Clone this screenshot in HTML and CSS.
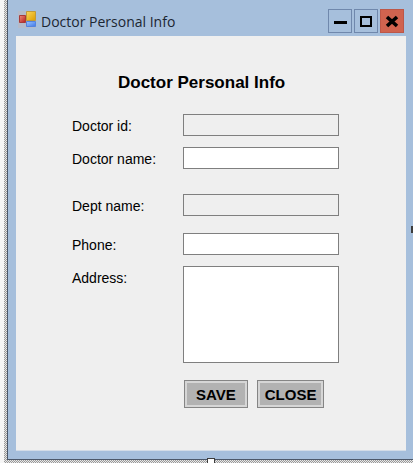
FILE: index.html
```html
<!DOCTYPE html>
<html lang="en">
<head>
<meta charset="utf-8">
<title>Doctor Personal Info</title>
<link rel="stylesheet" href="styles.css">
</head>
<body>
<div class="designer">
  <main class="window">
    <header class="titlebar">
      <svg class="app-icon" width="18" height="18" viewBox="0 0 18 18" aria-hidden="true">
        <defs>
          <linearGradient id="red" x2="1" y2="1"><stop stop-color="#ef8b7c"/><stop offset="1" stop-color="#b51f1c"/></linearGradient>
          <linearGradient id="gold" x2="1" y2="1"><stop stop-color="#fbd75a"/><stop offset="1" stop-color="#dc9d00"/></linearGradient>
          <linearGradient id="blue" x2="1" y2="1"><stop stop-color="#9cc4ff"/><stop offset="1" stop-color="#3f78e8"/></linearGradient>
        </defs>
        <path d="M0 0h18v17H0z" fill="#b4bbca"/>
        <path d="M1.500 4.500h6v7h-6z" fill="url(#red)" stroke="#a83a38"/>
        <path d="M8.500 .5h9v9h-9z" fill="url(#gold)" stroke="#c09a38"/>
        <path d="M8.500 10.500h9v5h-9z" fill="url(#blue)" stroke="#5584dc"/>
      </svg>
      <span class="caption">Doctor Personal Info</span>
      <button class="control" type="button" aria-label="Minimize">
        <svg width="22" height="22" viewBox="0 0 22 22"><path d="M5 11h13v3H5z"/></svg>
      </button>
      <button class="control" type="button" aria-label="Maximize">
        <svg width="22" height="22" viewBox="0 0 22 22"><path d="M5 6h12v11H5zM7 8v7h8V8z" fill-rule="evenodd"/></svg>
      </button>
      <button class="control control-close" type="button" aria-label="Close window">
        <svg width="22" height="22" viewBox="0 0 22 22"><path d="M6 7l10 9M16 7l-10 9" stroke="#000" stroke-width="3.600"/></svg>
      </button>
    </header>
    <form class="form">
      <h1 class="heading">Doctor Personal Info</h1>
      <div class="row">
        <label for="doctor-id">Doctor id:</label>
        <input class="field" id="doctor-id" type="text" disabled>
      </div>
      <div class="row row-last">
        <label for="doctor-name">Doctor name:</label>
        <input class="field" id="doctor-name" type="text">
      </div>
      <div class="row row-wide">
        <label for="dept-name">Dept name:</label>
        <input class="field" id="dept-name" type="text" disabled>
      </div>
      <div class="row">
        <label for="phone">Phone:</label>
        <input class="field" id="phone" type="text">
      </div>
      <div class="row">
        <label for="address">Address:</label>
        <textarea class="field field-tall" id="address"></textarea>
      </div>
      <div class="actions">
        <button class="action action-save" type="button">SAVE</button>
        <button class="action" type="button">CLOSE</button>
      </div>
    </form>
  </main>
  <span class="handle handle-bottom"></span>
  <span class="handle handle-right"></span>
</div>
</body>
</html>
```
FILE: styles.css
```css
* {
  box-sizing: border-box;
}

body {
  margin: 0;
  background: #f6f6f6;
  font-family: "Liberation Sans", Arial, sans-serif;
  color: #000;
  overflow: hidden;
}

.designer {
  position: relative;
  display: flex;
  flex-direction: column;
  min-height: 100vh;
  margin-left: 4px;
  padding: 0 0 3px 3px;
  background: repeating-conic-gradient(#999 0 25%, #e8e8e8 0 50%) 0 0 / 2px 2px;
}

.window {
  flex: 1;
  display: flex;
  flex-direction: column;
  padding: 0 7px 8px 8px;
  border: solid #4c586a;
  border-width: 0 0 1px 1px;
  background: #a6bfdc;
}

.titlebar {
  display: flex;
  align-items: center;
  gap: 2px;
  height: 36px;
  padding: 6px 2px 0 2px;
}

.app-icon {
  flex: none;
  margin-bottom: 2px;
}

.caption {
  flex: 1;
  padding: 0 0 0 3px;
  font: 14px "Open Sans", "Segoe UI", sans-serif;
  color: #1c2632;
}

.control {
  display: flex;
  width: 24px;
  height: 24px;
  padding: 0;
  border: 1px solid #7088ac;
  background: transparent;
}

.control-close {
  border-color: #bd5748;
  background: #d0634f;
}

.form {
  flex: 1;
  padding: 37px 56px 42px;
  border-bottom: 1px solid #d3dce7;
  background: #efefef;
}

.heading {
  margin: 0 0 21px 46px;
  font-size: 17px;
  line-height: 20px;
}

.row {
  display: grid;
  grid-template-columns: 111px minmax(0, 156px);
  margin-bottom: 11px;
  font-size: 14px;
  line-height: 24px;
}

.row-last {
  margin-bottom: 25px;
}

.row-wide {
  margin-bottom: 17px;
}

.row label {
  height: 22px;
}

.field {
  width: 100%;
  height: 22px;
  padding: 2px 4px;
  border: 1px solid #7f7f7f;
  border-radius: 0;
  background: #fff;
  font: inherit;
  resize: none;
}

.field:disabled {
  background: #efefef;
}

.field-tall {
  height: 97px;
}

.actions {
  display: flex;
  gap: 9px;
  margin: 17px 0 0 112px;
}

.action {
  height: 28px;
  padding: 0 7px;
  border: 1px solid #858585;
  background: #b2b2b2;
  box-shadow: inset 0 0 0 2px #d6d6d6;
  font: bold 15px "Liberation Sans", Arial, sans-serif;
  color: #000;
}

.action-save {
  padding: 0 11px;
}

.handle {
  position: absolute;
  border: 1px solid #3c3c3c;
  background: #fff;
}

.handle-bottom {
  bottom: -3px;
  left: calc(50% - 2px);
  width: 8px;
  height: 8px;
}

.handle-right {
  top: 50%;
  right: 0;
  width: 1px;
  height: 7px;
  margin-top: -6px;
}
```
